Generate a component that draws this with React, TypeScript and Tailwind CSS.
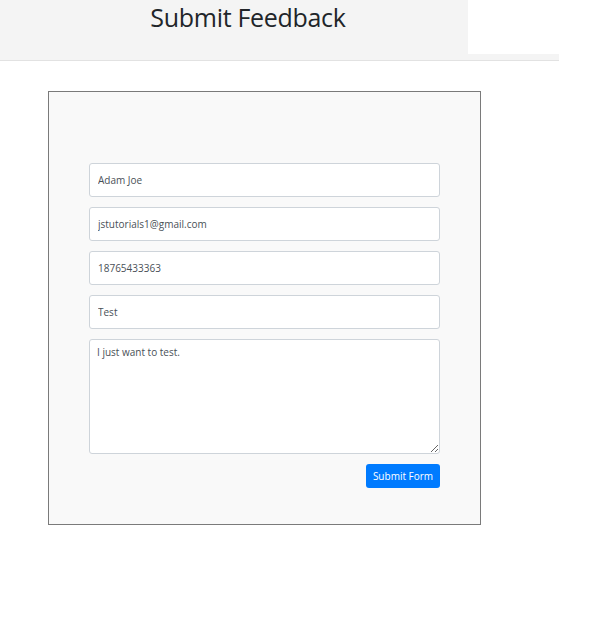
const fields = [
  { value: 'Adam Joe' },
  { value: 'jstutorials1@gmail.com' },
  { value: '18765433363' },
  { value: 'Test' },
];

export default function App() {
  return (
    <div className="min-h-[643px] bg-white font-['Open_Sans',sans-serif]">
      {/* header */}
      <div className="w-[559px] border-b border-[#e2e2e2]">
        <div className="flex">
          <div className="w-[468px] h-[54px] bg-[#f4f4f4] pl-[28px] text-center">
            <h1 className="text-[25px] leading-[34px] text-[#212529] tracking-[-0.3px]">Submit Feedback</h1>
          </div>
          <div className="flex-1 bg-white" />
        </div>
        <div className="h-[6px] bg-[#f4f4f4]" />
      </div>

      <div className="pl-[48px] pt-[30px]">
        <form
          className="w-[433px] border border-[#7a7a7a] bg-[#f9f9f9] pl-[40px] pr-[40px] pt-[71px] pb-[36px]"
          onSubmit={(e) => e.preventDefault()}
        >
          <div className="flex flex-col gap-[10px]">
            {fields.map((f) => (
              <input
                key={f.value}
                defaultValue={f.value}
                className="h-[34px] w-full rounded-[3px] border border-[#ced4da] bg-white px-[8px] text-[10px] text-[#495057] outline-none"
              />
            ))}
            <textarea
              defaultValue="I just want to test."
              className="h-[115px] w-full rounded-[3px] border border-[#ced4da] bg-white px-[7px] pt-[5px] text-[10px] text-[#495057] outline-none"
            />
          </div>
          <div className="mt-[10px] flex justify-end">
            <button
              type="submit"
              className="h-[24px] w-[74px] rounded-[3px] bg-[#007bff] text-[10px] text-white"
            >
              Submit Form
            </button>
          </div>
        </form>
      </div>
    </div>
  );
}
